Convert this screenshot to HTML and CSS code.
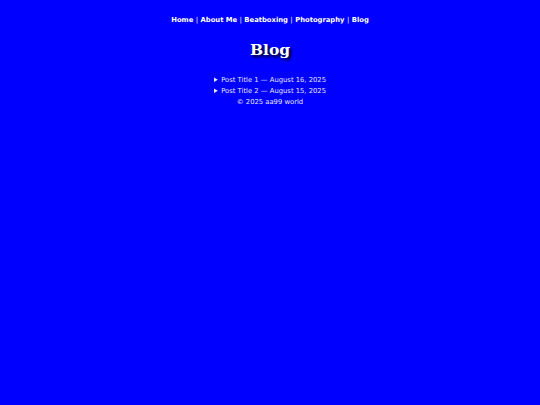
FILE: index.html
```html
<!DOCTYPE html>
<html lang="en">
<head>
<meta charset="utf-8">
<title>Blog</title>
<link rel="stylesheet" href="styles.css">
</head>
<body>
<nav class="nav">
  <a href="#">Home</a> | <a href="#">About Me</a> | <a href="#">Beatboxing</a> | <a href="#">Photography</a> | <a href="#">Blog</a>
</nav>
<h1 class="title">Blog</h1>
<div class="posts">
  <details class="post"><summary>Post Title 1 — August 16, 2025</summary></details>
  <details class="post"><summary>Post Title 2 — August 15, 2025</summary></details>
</div>
<footer class="footer">© 2025 aa99 world</footer>
</body>
</html>
```
FILE: styles.css
```css
html, body {
  margin: 0;
  padding: 0;
}
body {
  background: #0000ff;
  color: #e6e6ff;
  font-family: "DejaVu Sans", Verdana, sans-serif;
  font-size: 6.8px;
  text-align: center;
  padding-top: 15px;
}
.nav {
  font-weight: bold;
  color: #ccccff;
  line-height: 10px;
}
.nav a {
  color: #ffffff;
  text-decoration: none;
}
.title {
  font-family: "DejaVu Serif", Georgia, serif;
  font-size: 15.5px;
  font-weight: bold;
  color: #ffffff;
  text-shadow: 2px 2px 3px #000;
  margin: 15px 0 15px;
  line-height: 20px;
}
.posts {
  display: flex;
  flex-direction: column;
  align-items: center;
}
.post summary {
  cursor: pointer;
  line-height: 11px;
}
.footer {
  line-height: 11px;
}
```
